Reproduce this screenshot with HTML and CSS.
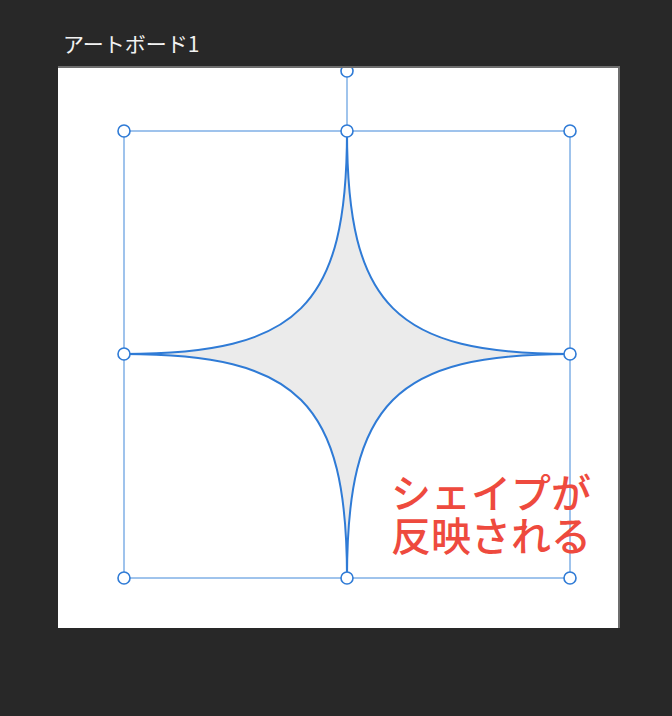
FILE: index.html
```html
<!DOCTYPE html>
<html lang="ja">
<head>
<meta charset="utf-8">
<link rel="stylesheet" href="styles.css">
</head>
<body>
<div class="stage">
  <div class="label">アートボード1</div>
  <div class="artboard">
    <svg class="canvas" viewBox="58 68 560 560" width="560" height="560">
      <path class="shape" d="M347 131 C347 306 395 354 570 354 C395 354 347 402 347 578 C347 402 299 354 124 354 C299 354 347 306 347 131 Z"/>
      <rect class="bbox" x="124" y="131" width="446" height="447"/>
      <line class="bbox" x1="347" y1="71" x2="347" y2="131"/>
      <g class="handles">
        <circle cx="347" cy="71" r="6"/>
        <circle cx="124" cy="131" r="6"/>
        <circle cx="347" cy="131" r="6"/>
        <circle cx="570" cy="131" r="6"/>
        <circle cx="124" cy="354" r="6"/>
        <circle cx="570" cy="354" r="6"/>
        <circle cx="124" cy="578" r="6"/>
        <circle cx="347" cy="578" r="6"/>
        <circle cx="570" cy="578" r="6"/>
      </g>
    </svg>
    <div class="note">シェイプが<br>反映される</div>
  </div>
</div>
</body>
</html>
```

FILE: styles.css
```css
html, body {
  margin: 0;
  padding: 0;
  background: #282828;
}
.stage {
  padding: 28px 0 0 58px;
  font-family: "Noto Sans CJK JP", "Noto Sans", sans-serif;
}
.label {
  color: #f2f2f2;
  font-size: 21px;
  line-height: 30px;
  height: 30px;
  margin-left: 5px;
  margin-bottom: 8px;
}
.artboard {
  position: relative;
  width: 560px;
  height: 560px;
  background: #ffffff;
  border-top: 2px solid #6e6e6e;
  border-right: 2px solid #6e6e6e;
}
.canvas {
  display: block;
}
.shape {
  fill: #ebebeb;
  stroke: #2f7bd6;
  stroke-width: 2;
}
.bbox {
  fill: none;
  stroke: #80b0e6;
  stroke-width: 1.5;
}
.handles circle {
  fill: #ffffff;
  stroke: #2f7bd6;
  stroke-width: 1.6;
}
.note {
  position: absolute;
  left: 333px;
  top: 402px;
  color: #ee4a3e;
  font-size: 40px;
  font-weight: 500;
  line-height: 43px;
  white-space: nowrap;
}
```
